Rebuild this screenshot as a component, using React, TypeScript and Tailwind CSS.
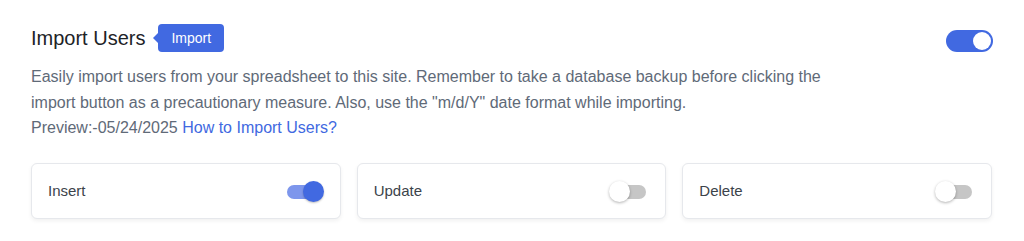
import type React from "react";

function MainSwitch({ on }: { on: boolean }): React.ReactElement {
  return (
    <div
      className={`flex h-[22px] w-[47px] items-center rounded-full px-[2px] ${
        on ? "justify-end bg-[#4169e1]" : "justify-start bg-[#c3c4c7]"
      }`}
    >
      <div className="h-[18px] w-[18px] rounded-full bg-white" />
    </div>
  );
}

function CardSwitch({ on }: { on: boolean }): React.ReactElement {
  return (
    <div className="relative flex h-[21px] w-[40px] items-center">
      <div
        className={`mx-auto h-[14px] w-[34px] rounded-full ${
          on ? "bg-[#7d96ec]" : "bg-[#c6c6c6]"
        }`}
      />
      <div
        className={`absolute top-0 h-[21px] w-[21px] rounded-full ${
          on
            ? "right-0 bg-[#4169e1] shadow-[0_1px_2px_rgba(0,0,0,0.25)]"
            : "left-0 bg-white shadow-[0_1px_3px_rgba(0,0,0,0.3)]"
        }`}
      />
    </div>
  );
}

const actions = [
  { label: "Insert", on: true },
  { label: "Update", on: false },
  { label: "Delete", on: false },
];

export default function App(): React.ReactElement {
  return (
    <div className="h-[241px] w-[1024px] bg-white px-[31px] pt-[24px] font-['Liberation_Sans',Arial,sans-serif]">
      <div className="flex items-start justify-between">
        <div className="flex items-center">
          <h2 className="text-[20px] leading-[28px] text-[#1d2327]">Import Users</h2>
          <div className="ml-[8px] flex items-center">
            <div className="h-0 w-0 border-y-[5px] border-r-[5px] border-y-transparent border-r-[#4169e1]" />
            <span className="rounded-[4px] bg-[#4169e1] px-[13px] text-[14px] leading-[28px] text-white">
              Import
            </span>
          </div>
        </div>
        <div className="pt-[6px]">
          <MainSwitch on />
        </div>
      </div>

      <p className="mt-[12px] w-[800px] text-[16px] leading-[25.5px] text-[#5f6a78]">
        Easily import users from your spreadsheet to this site. Remember to take a database backup before
        clicking the import button as a precautionary measure. Also, use the "m/d/Y" date format while
        importing.
        <br />
        Preview:-05/24/2025{" "}
        <a href="#" className="text-[#4169e1]">
          How to Import Users?
        </a>
      </p>

      <div className="mt-[22px] grid grid-cols-3 gap-[16px] pr-[1px]">
        {actions.map((a) => (
          <div
            key={a.label}
            className="flex h-[56px] items-center justify-between rounded-[6px] border border-[#e6e8ec] bg-white pt-[2px] pr-[16px] pl-[16px] shadow-[0_2px_4px_rgba(0,0,0,0.06)]"
          >
            <span className="text-[15px] text-[#3c434a]">{a.label}</span>
            <CardSwitch on={a.on} />
          </div>
        ))}
      </div>
    </div>
  );
}
